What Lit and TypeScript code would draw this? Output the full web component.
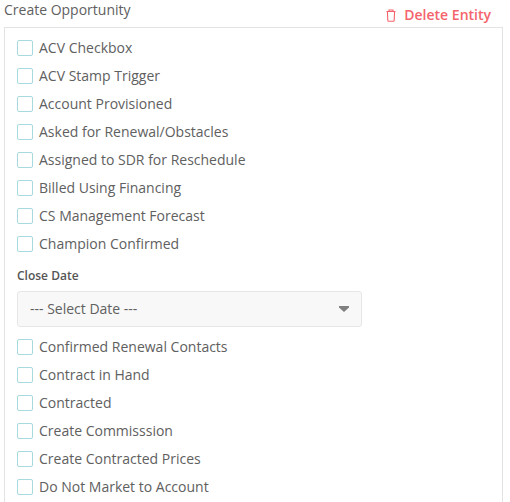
import { LitElement, html, css } from "lit";
import { customElement } from "lit/decorators.js";

const first = ["ACV Checkbox", "ACV Stamp Trigger", "Account Provisioned", "Asked for Renewal/Obstacles", "Assigned to SDR for Reschedule", "Billed Using Financing", "CS Management Forecast", "Champion Confirmed"];
const second = ["Confirmed Renewal Contacts", "Contract in Hand", "Contracted", "Create Commisssion", "Create Contracted Prices", "Do Not Market to Account"];

@customElement("app-root")
export class AppRoot extends LitElement {
  static styles = css`
    :host {
      display: block;
      width: 510px;
      height: 502px;
      overflow: hidden;
      background: #fff;
      font-family: "Open Sans", sans-serif;
      font-size: 14px;
      color: #606060;
      box-sizing: border-box;
    }
    .head {
      display: flex;
      justify-content: space-between;
      height: 27px;
      padding: 0 19px 0 4px;
      box-sizing: border-box;
    }
    .title { line-height: 19px; }
    .delete {
      display: flex;
      align-items: center;
      gap: 8px;
      height: 30px;
      color: #f4636b;
      font-weight: 600;
      line-height: 30px;
    }
    .delete svg { display: block; }
    .panel {
      margin: 0 7px 0 4px;
      border: 1px solid #e3e3e3;
      padding: 6px 12px 24px;
      background: #fff;
    }
    .row {
      display: flex;
      align-items: center;
      gap: 6px;
      height: 28px;
    }
    .row .text { padding-bottom: 2px; }
    .box {
      width: 14px;
      height: 14px;
      border: 1px solid #a6dade;
      border-radius: 2px;
      background: #fff;
      flex: none;
    }
    .label {
      font-size: 12px;
      font-weight: 600;
      color: #555;
      line-height: 17px;
      margin-top: 9px;
    }
    .select {
      display: flex;
      align-items: center;
      justify-content: space-between;
      box-sizing: border-box;
      width: 345px;
      height: 36px;
      margin: 7px 0 6px;
      padding: 0 12px;
      border: 1px solid #e6e6e6;
      border-radius: 3px;
      background: #f8f8f8;
    }
    .select .text { padding-bottom: 2px; }
    .select svg { display: block; }
  `;

  private row(t: string) {
    return html`<div class="row"><span class="box"></span><span class="text">${t}</span></div>`;
  }

  render() {
    return html`
      <div class="head">
        <div class="title">Create Opportunity</div>
        <div class="delete">
          <svg width="10" height="13" viewBox="0 0 10 13" fill="none" stroke="#f4636b" stroke-width="1.1">
            <path d="M0.5 2.5h9M3 2.5V1h4v1.5M1.4 2.5l.4 8.7a1 1 0 0 0 1 1h4.4a1 1 0 0 0 1-1l.4-8.7"></path>
          </svg>
          <span>Delete Entity</span>
        </div>
      </div>
      <div class="panel">
        ${first.map((t) => this.row(t))}
        <div class="label">Close Date</div>
        <div class="select">
          <span class="text">--- Select Date ---</span>
          <svg width="10" height="6" viewBox="0 0 10 6"><path d="M0 0h10v1.5L5 6 0 1.5z" fill="#808080"></path></svg>
        </div>
        ${second.map((t) => this.row(t))}
      </div>
    `;
  }
}
